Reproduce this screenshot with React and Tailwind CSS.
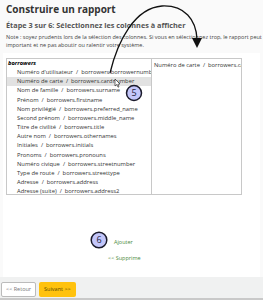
import React from "react";

const rows = [
  ["Numéro d'utilisateur", "borrowers.borrowernumber"],
  ["Numéro de carte", "borrowers.cardnumber"],
  ["Nom de famille", "borrowers.surname"],
  ["Prénom", "borrowers.firstname"],
  ["Nom privilégié", "borrowers.preferred_name"],
  ["Second prénom", "borrowers.middle_name"],
  ["Titre de civilité", "borrowers.title"],
  ["Autre nom", "borrowers.othernames"],
  ["Initiales", "borrowers.initials"],
  ["Pronoms", "borrowers.pronouns"],
  ["Numéro civique", "borrowers.streetnumber"],
  ["Type de route", "borrowers.streettype"],
  ["Adresse", "borrowers.address"],
  ["Adresse (suite)", "borrowers.address2"],
];

export default function App() {
  return (
    <div
      className="relative w-[263px] h-[300px] overflow-hidden bg-[#fafafa] flex flex-col text-[#333]"
      style={{ fontFamily: '"Open Sans", "Noto Sans", sans-serif' }}
    >
      <div className="px-[6px] pt-[3px]">
        <h1 className="text-[10px] leading-[12px] font-bold text-[#333]">Construire un rapport</h1>
        <h2 className="mt-[6px] text-[7.3px] leading-[9px] font-bold text-[#555]">
          Étape 3 sur 6: Sélectionnez les colonnes à afficher
        </h2>
        <p className="mt-[4px] text-[5.5px] leading-[7.5px] text-[#444] whitespace-nowrap">
          Note : soyez prudents lors de la sélection des colonnes. Si vous en sélectionnez trop, le rapport peut être
          <br />
          important et ne pas aboutir ou ralentir votre système.
        </p>
      </div>

      <div className="mt-[4px] mx-[3px] flex-1 bg-white flex flex-col">
        <div className="flex pl-[3px] pt-[5px]">
          <div className="w-[146px] h-[137px] border border-[#c8c8c8] bg-white overflow-hidden text-[5.8px] leading-[9.15px]">
            <div className="pl-[1px] font-bold italic text-black">borrowers</div>
            {rows.map(([a, b], i) => (
              <div
                key={i}
                className={`pl-[10px] whitespace-pre ${i === 1 ? "bg-[#e2e2e2]" : ""}`}
              >
                {a}  /  {b}
              </div>
            ))}
          </div>
          <div className="w-[90px] h-[137px] border border-l-0 border-[#c8c8c8] bg-white overflow-hidden text-[5.8px] leading-[9.15px]">
            <div className="pl-[2px] pt-[2px] whitespace-pre">Numéro de carte  /  borrowers.cardnumber</div>
          </div>
        </div>
        <div className="flex flex-col items-start pl-[105px] pt-[43px] text-[5.5px] text-[#4c8a3c]">
          <span className="pl-[6px]">Ajouter</span>
          <span className="mt-[8px]">&lt;&lt; Supprime</span>
        </div>
      </div>

      <div className="h-[23px] bg-[#f0f1f1] border-b-[2px] border-[#c9c9c9] flex items-end gap-[3px] pl-[1px] pb-[1px]">
        <button className="h-[15px] px-[4px] rounded-[2px] border border-[#bbb] bg-white text-[5.5px] text-[#777]">
          &lt;&lt; Retour
        </button>
        <button className="h-[15px] px-[5px] rounded-[2px] bg-[#ffc20e] text-[5.5px] text-[#5a4a00]">
          Suivant &gt;&gt;
        </button>
      </div>

      {/* annotations */}
      <svg className="absolute left-0 top-0" width="263" height="300" viewBox="0 0 263 300">
        <path
          d="M110 73 C 118 40, 135 8, 162 6 C 185 5, 196 20, 197 39"
          fill="none"
          stroke="#111"
          strokeWidth="1.3"
        />
        <polygon points="192,38 202,38 197,48" fill="#111" />
        <path d="M115 79 L115 86 L116.8 84.5 L118 87.2 L119 86.8 L117.9 84.2 L120 84 Z" fill="#fff" stroke="#111" strokeWidth="0.6" />
        <circle cx="134" cy="93" r="7.5" fill="#c3c6fa" stroke="#1a1a2a" strokeWidth="1.5" />
        <text x="134" y="96.3" textAnchor="middle" fontSize="9" fill="#22223a" fontFamily="Open Sans, sans-serif">5</text>
        <circle cx="99" cy="240" r="7.8" fill="#c3c6fa" stroke="#1a1a2a" strokeWidth="1.5" />
        <text x="99" y="243.3" textAnchor="middle" fontSize="9" fill="#22223a" fontFamily="Open Sans, sans-serif">6</text>
      </svg>
    </div>
  );
}
